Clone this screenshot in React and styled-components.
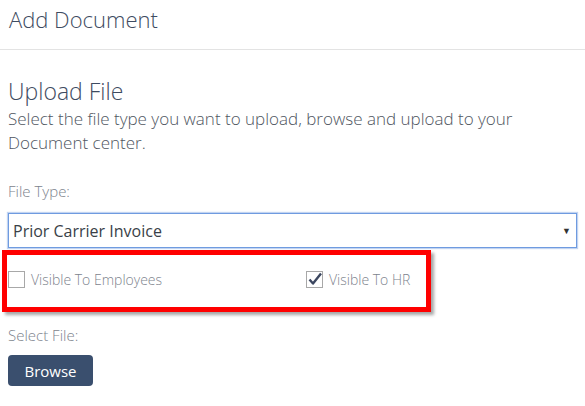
import React, { useState } from "react";
import styled, { createGlobalStyle } from "styled-components";

const GlobalStyle = createGlobalStyle`
  html, body {
    margin: 0;
    padding: 0;
    background: #fff;
    font-family: "Open Sans", "Liberation Sans", sans-serif;
  }
`;

const Page = styled.div`
  width: 585px;
  height: 406px;
  overflow: hidden;
  background: #fff;
`;

const Header = styled.div`
  height: 50px;
  box-sizing: border-box;
  padding: 4px 9px 0;
  border-bottom: 1px solid #e3e3e3;
  h1 {
    margin: 0;
    font-size: 22px;
    font-weight: 300;
    line-height: 30px;
    color: #3e4b61;
  }
`;

const Body = styled.div`
  padding: 26px 8px 0;
`;

const Title = styled.h2`
  margin: 0;
  font-size: 23px;
  font-weight: 300;
  line-height: 30px;
  color: #3e4b61;
`;

const Lead = styled.p`
  margin: 1px 0 0;
  font-size: 17px;
  font-weight: 300;
  line-height: 24px;
  color: #4f5661;
  width: 530px;
`;

const Label = styled.div`
  margin-top: ${(p) => p.$top || 0}px;
  font-size: 15px;
  font-weight: 300;
  line-height: 20px;
  color: #7d838d;
`;

const SelectBox = styled.div`
  margin-top: 12px;
  height: 35px;
  box-sizing: border-box;
  width: 569px;
  border: 1px solid #6f9be0;
  box-shadow: 0 0 1px 1px rgba(120, 160, 225, 0.45);
  display: flex;
  align-items: center;
  justify-content: space-between;
  padding: 0 5px 0 4px;
  font-size: 16px;
  color: #3a3f48;
  cursor: pointer;
`;

const Arrow = styled.span`
  font-size: 9px;
  color: #333;
`;

// red annotation frame around the visibility checkboxes
const Highlight = styled.div`
  margin: 2px 0 0 -6px;
  width: 429px;
  height: 62px;
  box-sizing: border-box;
  border: 5px solid #ff0000;
  box-shadow: 3px 3px 3px rgba(0, 0, 0, 0.35);
  display: flex;
  align-items: center;
  padding: 0 0 4px 1px;
`;

const CheckItem = styled.label`
  display: flex;
  align-items: center;
  gap: 6px;
  font-size: 14px;
  font-weight: 300;
  color: #7d838d;
  width: ${(p) => p.$width || "auto"};
  cursor: pointer;
`;

const Box = styled.span`
  width: 15px;
  height: 15px;
  border: 1px solid #a8a8a8;
  background: #fff;
  display: flex;
  align-items: center;
  justify-content: center;
`;

const Button = styled.button`
  margin-top: 10px;
  width: 85px;
  height: 31px;
  border: 0;
  border-radius: 4px;
  background: #3a4f6e;
  color: #fff;
  font-family: inherit;
  font-size: 15px;
  cursor: pointer;
`;

const Check = ({ checked, label, width, onToggle }) => (
  <CheckItem $width={width} onClick={onToggle}>
    <Box>
      {checked && (
        <svg width="14" height="14" viewBox="0 0 14 14">
          <path d="M1.5 7.5 L5 11.5 L13 1.5" stroke="#3c4760" strokeWidth="2.4" fill="none" strokeLinejoin="round" />
        </svg>
      )}
    </Box>
    {label}
  </CheckItem>
);

export default function App() {
  const [emp, setEmp] = useState(false);
  const [hr, setHr] = useState(true);

  return (
    <>
      <GlobalStyle />
      <Page>
        <Header>
          <h1>Add Document</h1>
        </Header>
        <Body>
          <Title>Upload File</Title>
          <Lead>
            Select the file type you want to upload, browse and upload to your Document center.
          </Lead>
          <Label $top={26}>File Type:</Label>
          <SelectBox>
            Prior Carrier Invoice
            <Arrow>▼</Arrow>
          </SelectBox>
          <Highlight>
            <Check label="Visible To Employees" width="298px" checked={emp} onToggle={() => setEmp(!emp)} />
            <Check label="Visible To HR" checked={hr} onToggle={() => setHr(!hr)} />
          </Highlight>
          <Label $top={13}>Select File:</Label>
          <Button>Browse</Button>
        </Body>
      </Page>
    </>
  );
}
